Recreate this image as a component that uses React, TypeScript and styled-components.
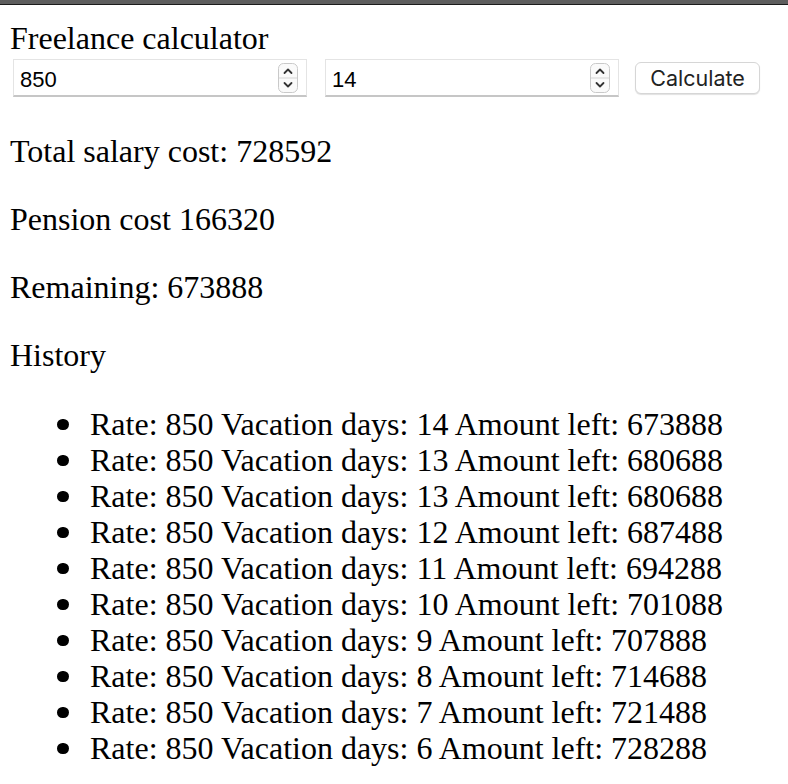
import React from "react";
import styled, { createGlobalStyle } from "styled-components";

const Global = createGlobalStyle`
  html, body { margin: 0; padding: 0; background: #fff; }
  body {
    font-family: "Liberation Serif", "Times New Roman", serif;
    font-size: 32px;
    color: #000;
  }
`;

const TopBar = styled.div`
  height: 4px;
  background: #5e5e5e;
  border-bottom: 1px solid #1c1c1c;
`;

const Page = styled.main`
  padding: 0 10px;
`;

const Title = styled.div`
  margin-top: 15px;
  line-height: 36px;
`;

const Controls = styled.form`
  display: flex;
  align-items: center;
  margin: 3px 0 0 3px;
`;

const Field = styled.div<{ $gap: number }>`
  position: relative;
  width: 294px;
  height: 38px;
  box-sizing: border-box;
  border: 1px solid #e4e4e4;
  border-bottom: 2px solid #c6c6c6;
  margin-right: ${(p) => p.$gap}px;
  display: flex;
  align-items: center;
`;

const NumberText = styled.input`
  flex: 1;
  min-width: 0;
  border: none;
  outline: none;
  background: transparent;
  padding: 4px 0 0 6px;
  font-family: "Liberation Sans", Arial, sans-serif;
  font-size: 22px;
  color: #000;
`;

const Spinner = styled.svg`
  width: 20px;
  height: 30px;
  margin-right: 8px;
  flex: none;
`;

const Button = styled.button`
  width: 125px;
  height: 32px;
  box-sizing: border-box;
  border: 1px solid #d6d6d6;
  border-radius: 6px;
  background: #fff;
  box-shadow: 0 1px 1px rgba(0, 0, 0, 0.12);
  font-family: Inter, "Liberation Sans", Arial, sans-serif;
  font-size: 21.5px;
  color: #222;
  padding: 0;
`;

const Line = styled.p`
  margin: 0;
  line-height: 36px;
`;

const Results = styled.section`
  display: flex;
  flex-direction: column;
  gap: 32px;
  margin-top: 36px;
`;

const List = styled.ul`
  margin: 33px 0 0;
  padding-left: 80px;
  line-height: 36px;
  list-style: none;
`;

const Item = styled.li`
  position: relative;
  &::before {
    content: "";
    position: absolute;
    left: -33px;
    top: 12.5px;
    width: 11.5px;
    height: 11.5px;
    border-radius: 50%;
    background: #000;
  }
`;

function Spin() {
  return (
    <Spinner viewBox="0 0 20 30">
      <rect x="0.5" y="0.5" width="19" height="29" rx="5" fill="#fafafa" stroke="#c9c9c9" />
      <line x1="1" y1="15" x2="19" y2="15" stroke="#d4d4d4" />
      <path d="M6.5 10 L10 6.5 L13.5 10" fill="none" stroke="#333" strokeWidth="1.8" strokeLinecap="round" strokeLinejoin="round" />
      <path d="M6.5 20 L10 23.5 L13.5 20" fill="none" stroke="#333" strokeWidth="1.8" strokeLinecap="round" strokeLinejoin="round" />
    </Spinner>
  );
}

const history: [number, number, number][] = [
  [850, 14, 673888],
  [850, 13, 680688],
  [850, 13, 680688],
  [850, 12, 687488],
  [850, 11, 694288],
  [850, 10, 701088],
  [850, 9, 707888],
  [850, 8, 714688],
  [850, 7, 721488],
  [850, 6, 728288],
];

export default function App() {
  return (
    <>
      <Global />
      <TopBar />
      <Page>
        <Title>Freelance calculator</Title>
        <Controls onSubmit={(e) => e.preventDefault()}>
          <Field $gap={18}>
            <NumberText defaultValue="850" />
            <Spin />
          </Field>
          <Field $gap={16}>
            <NumberText defaultValue="14" />
            <Spin />
          </Field>
          <Button type="submit">Calculate</Button>
        </Controls>
        <Results>
          <Line>Total salary cost: 728592</Line>
          <Line>Pension cost 166320</Line>
          <Line>Remaining: 673888</Line>
          <Line>History</Line>
        </Results>
        <List>
          {history.map(([r, d, a], i) => (
            <Item key={i}>
              Rate: {r} Vacation days: {d} Amount left: {a}
            </Item>
          ))}
        </List>
      </Page>
    </>
  );
}
